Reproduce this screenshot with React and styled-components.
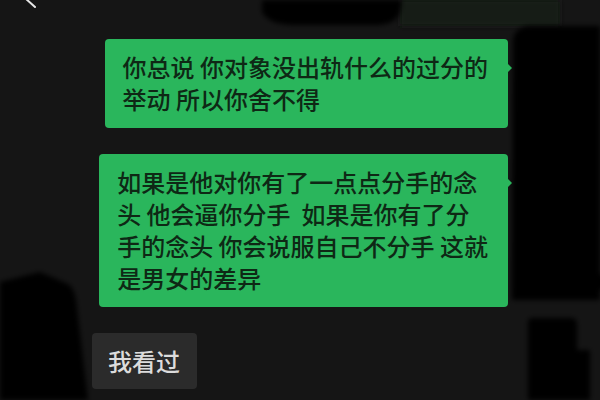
import React from "react";
import styled, { createGlobalStyle } from "styled-components";

const Global = createGlobalStyle`
  html, body { margin: 0; padding: 0; background: #151515; }
  body { font-family: "Noto Sans CJK SC", "Noto Sans", sans-serif; }
`;

const Screen = styled.div`
  position: relative;
  width: 600px;
  height: 400px;
  overflow: hidden;
  background: #151515;
`;

const Backdrop = styled.svg`
  position: absolute;
  inset: 0;
  width: 600px;
  height: 400px;
  pointer-events: none;
`;

const Chat = styled.div`
  position: relative;
  display: flex;
  flex-direction: column;
  gap: 26px;
  padding: 39px 92px 0;
`;

const Row = styled.div`
  display: flex;
  justify-content: ${(p) => (p.$out ? "flex-end" : "flex-start")};
`;

const Bubble = styled.div`
  position: relative;
  box-sizing: border-box;
  padding: ${(p) => (p.$out ? "12px 20px 13px 18px" : "12px 17px 12px 16px")};
  border-radius: 4px;
  background: ${(p) => (p.$out ? "#2ab65c" : "#2b2b2b")};
  color: ${(p) => (p.$out ? "#0e2815" : "#dcdcdc")};
  font-family: "Noto Sans CJK SC", "Noto Sans", sans-serif;
  font-size: 24px;
  font-weight: 500;
  line-height: 32px;
  white-space: pre;

  &::after {
    content: "";
    display: ${(p) => (p.$out ? "block" : "none")};
    position: absolute;
    right: -4px;
    top: 24px;
    border-style: solid;
    border-width: 5px 0 5px 5px;
    border-color: transparent transparent transparent #2ab65c;
  }
`;

export default function App() {
  return (
    <>
      <Global />
      <Screen>
        <Backdrop viewBox="0 0 600 400">
          <defs>
            <filter id="soft" x="-20%" y="-20%" width="140%" height="140%">
              <feGaussianBlur stdDeviation="2.5" />
            </filter>
          </defs>
          <rect x="400" y="0" width="160" height="26" fill="#121a16" filter="url(#soft)" />
          <path d="M262 0 L402 0 L400 12 Q396 24 378 25 L292 25 Q268 24 262 12 Z" fill="#050505" filter="url(#soft)" />
          <path d="M528 26 Q514 28 513 40 L512 300 L600 300 L600 26 Z" fill="#040404" filter="url(#soft)" />
          <ellipse cx="578" cy="282" rx="32" ry="10" fill="#050505" filter="url(#soft)" />
          <path d="M532 318 L572 318 Q577 318 577 325 L577 350 L590 350 L590 400 L528 400 L528 322 Q528 318 532 318 Z" fill="#050505" filter="url(#soft)" />
          <path d="M0 282 L40 272 L68 284 Q74 288 76 300 L88 400 L0 400 Z" fill="#040404" filter="url(#soft)" />
          <line x1="25" y1="-2" x2="35" y2="7" stroke="#e6e6e6" strokeWidth="2" strokeLinecap="round" />
        </Backdrop>
        <Chat>
          <Row $out>
            <Bubble $out>{"你总说 你对象没出轨什么的过分的\n举动 所以你舍不得"}</Bubble>
          </Row>
          <Row $out>
            <Bubble $out>
              {"如果是他对你有了一点点分手的念\n头 他会逼你分手  如果是你有了分\n手的念头 你会说服自己不分手 这就\n是男女的差异"}
            </Bubble>
          </Row>
          <Row>
            <Bubble>我看过</Bubble>
          </Row>
        </Chat>
      </Screen>
    </>
  );
}
